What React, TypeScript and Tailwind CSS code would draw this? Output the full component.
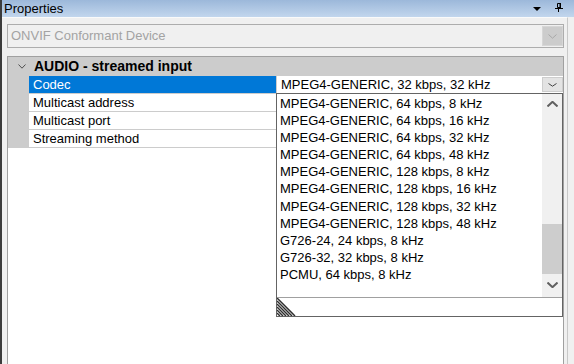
import React from 'react';

const CODECS = [
  'MPEG4-GENERIC, 64 kbps, 8 kHz',
  'MPEG4-GENERIC, 64 kbps, 16 kHz',
  'MPEG4-GENERIC, 64 kbps, 32 kHz',
  'MPEG4-GENERIC, 64 kbps, 48 kHz',
  'MPEG4-GENERIC, 128 kbps, 8 kHz',
  'MPEG4-GENERIC, 128 kbps, 16 kHz',
  'MPEG4-GENERIC, 128 kbps, 32 kHz',
  'MPEG4-GENERIC, 128 kbps, 48 kHz',
  'G726-24, 24 kbps, 8 kHz',
  'G726-32, 32 kbps, 8 kHz',
  'PCMU, 64 kbps, 8 kHz',
];

const ROWS = ['Multicast address', 'Multicast port', 'Streaming method'];

function Chevron({ w, h, color, width = 1, up = false }: { w: number; h: number; color: string; width?: number; up?: boolean }) {
  const pts = up
    ? `0.5,${h - 0.5} ${w / 2},0.8 ${w - 0.5},${h - 0.5}`
    : `0.5,0.5 ${w / 2},${h - 0.8} ${w - 0.5},0.5`;
  return (
    <svg width={w} height={h} viewBox={`0 0 ${w} ${h}`}>
      <polyline points={pts} fill="none" stroke={color} strokeWidth={width} />
    </svg>
  );
}

function Grip() {
  // hatched size grip, lines parallel to the diagonal
  const lines = [0, 3, 6, 9, 12, 15];
  return (
    <svg width="20" height="18" viewBox="0 0 20 18">
      {lines.map((c) => (
        <line key={c} x1={0} y1={c} x2={18 - c} y2={18} stroke="#2e2e2e" strokeWidth={1.5} />
      ))}
    </svg>
  );
}

export default function App() {
  return (
    <div className="relative w-[574px] h-[364px] overflow-hidden flex bg-[#f0f0f0] font-['Liberation_Sans',Arial,sans-serif] text-[13px] text-black">
      <div className="w-[2px] shrink-0 bg-[#3c3c3c]" />

      <div className="flex-1 flex flex-col">
        {/* title bar */}
        <div className="h-[17px] shrink-0 flex items-center bg-gradient-to-b from-[#9cb8da] to-[#c2d6ed]">
          <span className="pl-[2px] leading-[17px]">Properties</span>
          <div className="ml-auto flex items-center gap-[14px] pr-[11px]">
            <svg width="8" height="4" viewBox="0 0 8 4" className="mt-[1px]">
              <path d="M0 0h8L4 4z" fill="#000" />
            </svg>
            <svg width="8" height="9" viewBox="0 0 8 9" className="-mt-[2px]">
              <path d="M2.5 0.5h2.5v4h-2.5z" fill="none" stroke="#000" />
              <rect x="5" y="0" width="1" height="5" fill="#000" />
              <rect x="0" y="5" width="8" height="1" fill="#000" />
              <rect x="3" y="6" width="1" height="3" fill="#000" />
            </svg>
          </div>
        </div>

        <div className="flex flex-1">
          <div className="w-[566px] shrink-0 flex flex-col pl-[5px] pr-[3px] pt-[6px] border-t border-t-[#fafafa] border-r border-r-[#c8c8c8]">
            {/* disabled object combo */}
            <div className="h-[24px] shrink-0 flex items-start border border-[#adadad] pt-[1px]">
              <span className="pl-[3px] leading-[20px] text-[#a3a3a3]">ONVIF Conformant Device</span>
              <div className="ml-auto w-[21px] h-[20px] bg-[#cccccc] border border-[#d6d6d6] flex items-center justify-center">
                <Chevron w={9} h={5} color="#a8a8a8" />
              </div>
            </div>

            {/* property grid */}
            <div className="mt-[8px] flex-1 flex flex-col bg-white border-l border-t border-r border-[#a0a0a0]">
              <div className="h-[19px] shrink-0 flex items-center bg-[#cccccc]">
                <div className="w-[26px] flex justify-center pl-[2px]">
                  <Chevron w={8} h={5} color="#505050" />
                </div>
                <span className="font-bold text-[14px] leading-[19px]">AUDIO - streamed input</span>
              </div>

              <div className="h-[18px] shrink-0 flex border-b border-[#cccccc]">
                <div className="w-[21px] bg-[#cccccc]" />
                <div className="w-[247px] bg-[#0078d7] text-white pl-[4px] leading-[17px]">Codec</div>
                <div className="w-[1px] bg-[#cccccc]" />
                <div className="flex-1 flex items-center">
                  <span className="pl-[4px] leading-[17px]">MPEG4-GENERIC, 32 kbps, 32 kHz</span>
                  <div className="ml-auto w-[21px] h-[15px] bg-[#e3e3e3] border border-[#cdcdcd] flex items-center justify-center">
                    <Chevron w={9} h={4} color="#444444" />
                  </div>
                </div>
              </div>

              {ROWS.map((r) => (
                <div key={r} className="h-[18px] shrink-0 flex border-b border-[#cccccc]">
                  <div className="w-[21px] bg-[#cccccc]" />
                  <div className="w-[247px] pl-[4px] leading-[17px]">{r}</div>
                  <div className="w-[1px] bg-[#cccccc]" />
                  <div className="flex-1" />
                </div>
              ))}
            </div>
          </div>
          <div className="flex-1" />
        </div>
      </div>

      {/* open codec drop-down */}
      <div className="absolute left-[276px] top-[93px] w-[287px] h-[224px] flex flex-col bg-white border border-[#646464]">
        <div className="h-[203px] flex">
          <div className="flex-1 flex flex-col pl-[3px] pt-[1px]">
            {CODECS.map((c) => (
              <div key={c} className="h-[17.1px] leading-[17px] whitespace-nowrap">{c}</div>
            ))}
          </div>
          <div className="w-[20px] flex flex-col bg-[#f0f0f0]">
            <div className="h-[17px] flex items-center justify-center pt-[2px]">
              <Chevron w={11} h={6} color="#606060" width={2} up />
            </div>
            <div className="h-[113px]" />
            <div className="h-[50px] bg-[#cdcdcd]" />
            <div className="flex-1 flex items-start justify-center pt-[8px]">
              <Chevron w={11} h={6} color="#606060" width={2} />
            </div>
          </div>
        </div>
        <div className="flex-1 border-t border-[#a0a0a0] flex items-end">
          <Grip />
        </div>
      </div>
    </div>
  );
}
